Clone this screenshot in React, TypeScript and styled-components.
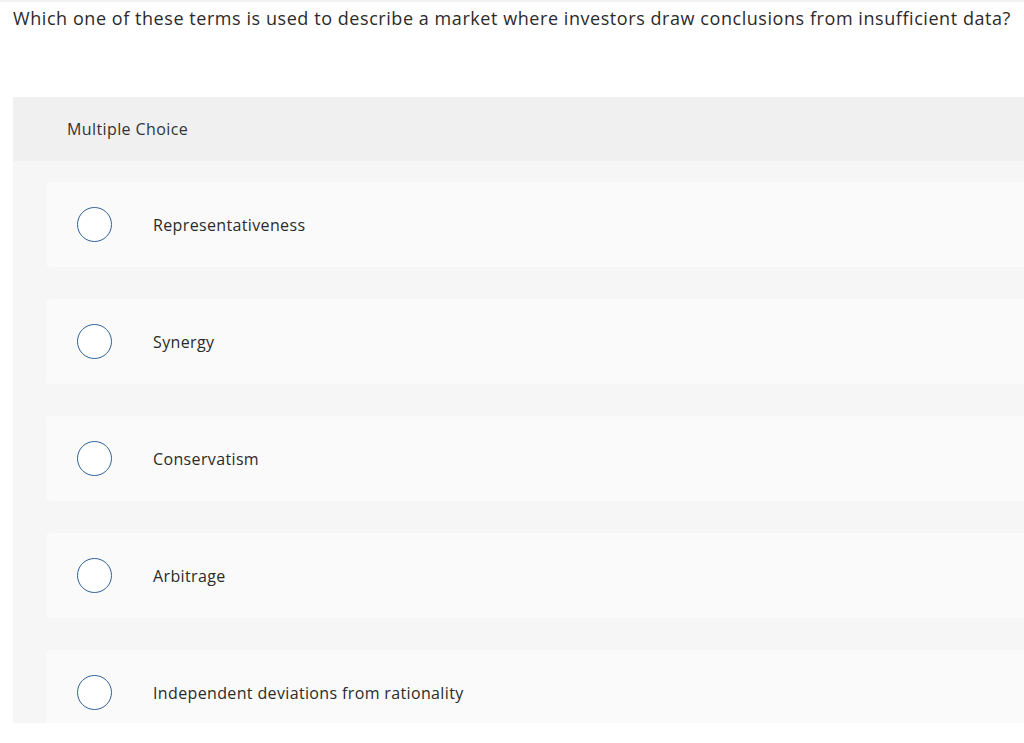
import styled, { createGlobalStyle } from "styled-components";

const GlobalStyle = createGlobalStyle`
  html, body {
    margin: 0;
    padding: 0;
    background: #ffffff;
  }
  body {
    font-family: "Open Sans", "Lato", sans-serif;
    color: #333333;
  }
`;

const Page = styled.div`
  width: 1024px;
  height: 743px;
  overflow: hidden;
  border-top: 2px solid #f2f2f2;
  box-sizing: border-box;
`;

const Question = styled.div`
  padding: 4px 0 0 13px;
  height: 95px;
  box-sizing: border-box;
  font-size: 18px;
  line-height: 24px;
  letter-spacing: 0.56px;
  color: #2b2b2b;
  white-space: nowrap;
`;

const Card = styled.div`
  margin-left: 13px;
  height: 626px;
  display: flex;
  flex-direction: column;
  background: #f6f6f6;
  overflow: hidden;
`;

const CardHeader = styled.div`
  height: 64px;
  flex-shrink: 0;
  display: flex;
  align-items: center;
  padding-left: 54px;
  background: #f0f0f0;
  font-size: 16px;
  letter-spacing: 0.4px;
  color: #333333;
`;

const Options = styled.div`
  display: flex;
  flex-direction: column;
  gap: 32px;
  padding: 21px 0 0 33px;
`;

const Option = styled.label`
  height: 85px;
  flex-shrink: 0;
  display: flex;
  align-items: center;
  padding-left: 31px;
  background: #fafafa;
  border-radius: 4px 0 0 4px;
  cursor: pointer;
`;

const Radio = styled.span`
  width: 35px;
  height: 35px;
  flex-shrink: 0;
  box-sizing: border-box;
  border: 1.5px solid #2f6198;
  border-radius: 50%;
  background: #ffffff;
`;

const OptionText = styled.span`
  margin-left: 41px;
  font-size: 16px;
  letter-spacing: 0.36px;
  color: #2b2b2b;
`;

const choices = [
  "Representativeness",
  "Synergy",
  "Conservatism",
  "Arbitrage",
  "Independent deviations from rationality",
];

export default function App() {
  return (
    <Page>
      <GlobalStyle />
      <Question>
        Which one of these terms is used to describe a market where investors draw conclusions from insufficient data?
      </Question>
      <Card>
        <CardHeader>Multiple Choice</CardHeader>
        <Options>
          {choices.map((c) => (
            <Option key={c}>
              <Radio />
              <OptionText>{c}</OptionText>
            </Option>
          ))}
        </Options>
      </Card>
    </Page>
  );
}
